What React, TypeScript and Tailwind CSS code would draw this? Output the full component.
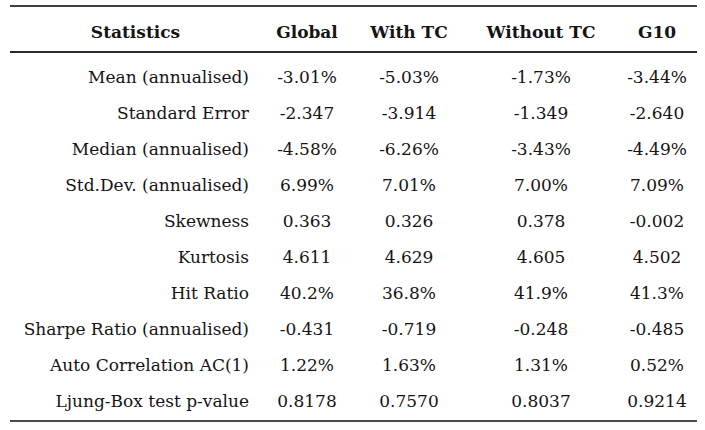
const rows: [string, string, string, string, string][] = [
  ['Mean (annualised)', '-3.01%', '-5.03%', '-1.73%', '-3.44%'],
  ['Standard Error', '-2.347', '-3.914', '-1.349', '-2.640'],
  ['Median (annualised)', '-4.58%', '-6.26%', '-3.43%', '-4.49%'],
  ['Std.Dev. (annualised)', '6.99%', '7.01%', '7.00%', '7.09%'],
  ['Skewness', '0.363', '0.326', '0.378', '-0.002'],
  ['Kurtosis', '4.611', '4.629', '4.605', '4.502'],
  ['Hit Ratio', '40.2%', '36.8%', '41.9%', '41.3%'],
  ['Sharpe Ratio (annualised)', '-0.431', '-0.719', '-0.248', '-0.485'],
  ['Auto Correlation AC(1)', '1.22%', '1.63%', '1.31%', '0.52%'],
  ['Ljung-Box test p-value', '0.8178', '0.7570', '0.8037', '0.9214'],
];

const grid = 'grid grid-cols-[251px_92px_112px_152px_80px]';

export default function App() {
  return (
    <div className="w-[705px] h-[430px] bg-white text-[#141414] font-['DejaVu_Serif',serif] text-[17px] leading-none">
      <div className="ml-[10px] w-[687px] pt-[5px]">
        <div className="h-[2px] bg-[#3f3f3f]" />
        <div className={`${grid} h-[44px] items-center pt-[6px] font-bold`}>
          <div className="text-center pl-[12px] pr-[12px]">Statistics</div>
          <div className="text-center">Global</div>
          <div className="text-center">With TC</div>
          <div className="text-center">Without TC</div>
          <div className="text-center">G10</div>
        </div>
        <div className="h-[2px] bg-[#2a2a2a]" />
        <div className="pt-[6px]">
          {rows.map((r) => (
            <div key={r[0]} className={`${grid} h-[36px] items-center`}>
              <div className="text-right pr-[12px] whitespace-nowrap">{r[0]}</div>
              <div className="text-center">{r[1]}</div>
              <div className="text-center">{r[2]}</div>
              <div className="text-center">{r[3]}</div>
              <div className="text-center">{r[4]}</div>
            </div>
          ))}
        </div>
        <div className="mt-[1px] h-[2px] bg-[#4a4a4a]" />
      </div>
    </div>
  );
}
